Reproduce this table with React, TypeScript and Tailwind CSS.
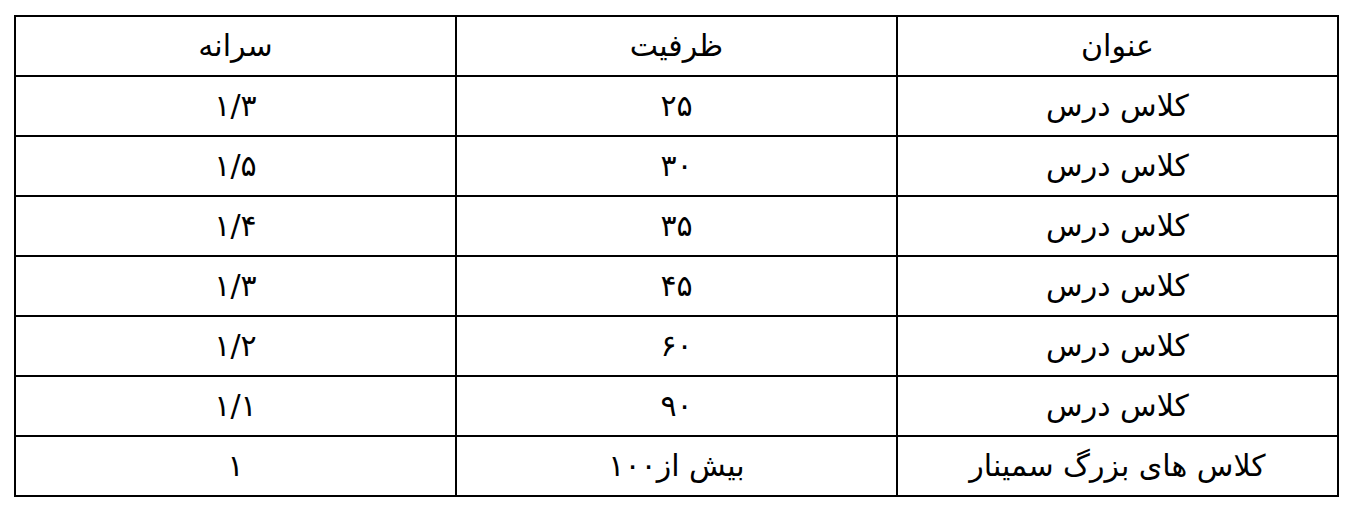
const rows = [
  { title: "کلاس درس", cap: "۲۵", per: "۱/۳" },
  { title: "کلاس درس", cap: "۳۰", per: "۱/۵" },
  { title: "کلاس درس", cap: "۳۵", per: "۱/۴" },
  { title: "کلاس درس", cap: "۴۵", per: "۱/۳" },
  { title: "کلاس درس", cap: "۶۰", per: "۱/۲" },
  { title: "کلاس درس", cap: "۹۰", per: "۱/۱" },
  { title: "کلاس های بزرگ سمینار", cap: "بیش از۱۰۰", per: "۱" },
];

export default function App() {
  return (
    <div className="bg-white w-[1359px] h-[529px] pl-[14px] pt-[15px] font-['DejaVu_Sans',sans-serif] text-black">
      <table dir="rtl" className="w-[1325px] border-collapse table-fixed">
        <thead>
          <tr className="h-[60px]">
            <th className="border-2 border-black p-0 font-normal text-[30px] leading-none text-center">عنوان</th>
            <th className="border-2 border-black p-0 font-normal text-[30px] leading-none text-center">ظرفیت</th>
            <th className="border-2 border-black p-0 font-normal text-[30px] leading-none text-center">سرانه</th>
          </tr>
        </thead>
        <tbody>
          {rows.map((r, i) => (
            <tr key={i} className="h-[60px]">
              <td className="border-2 border-black p-0 text-[30px] leading-none text-center">{r.title}</td>
              <td className="border-2 border-black p-0 text-[30px] leading-none text-center">{r.cap}</td>
              <td className="border-2 border-black p-0 text-[30px] leading-none text-center">{r.per}</td>
            </tr>
          ))}
        </tbody>
      </table>
    </div>
  );
}
